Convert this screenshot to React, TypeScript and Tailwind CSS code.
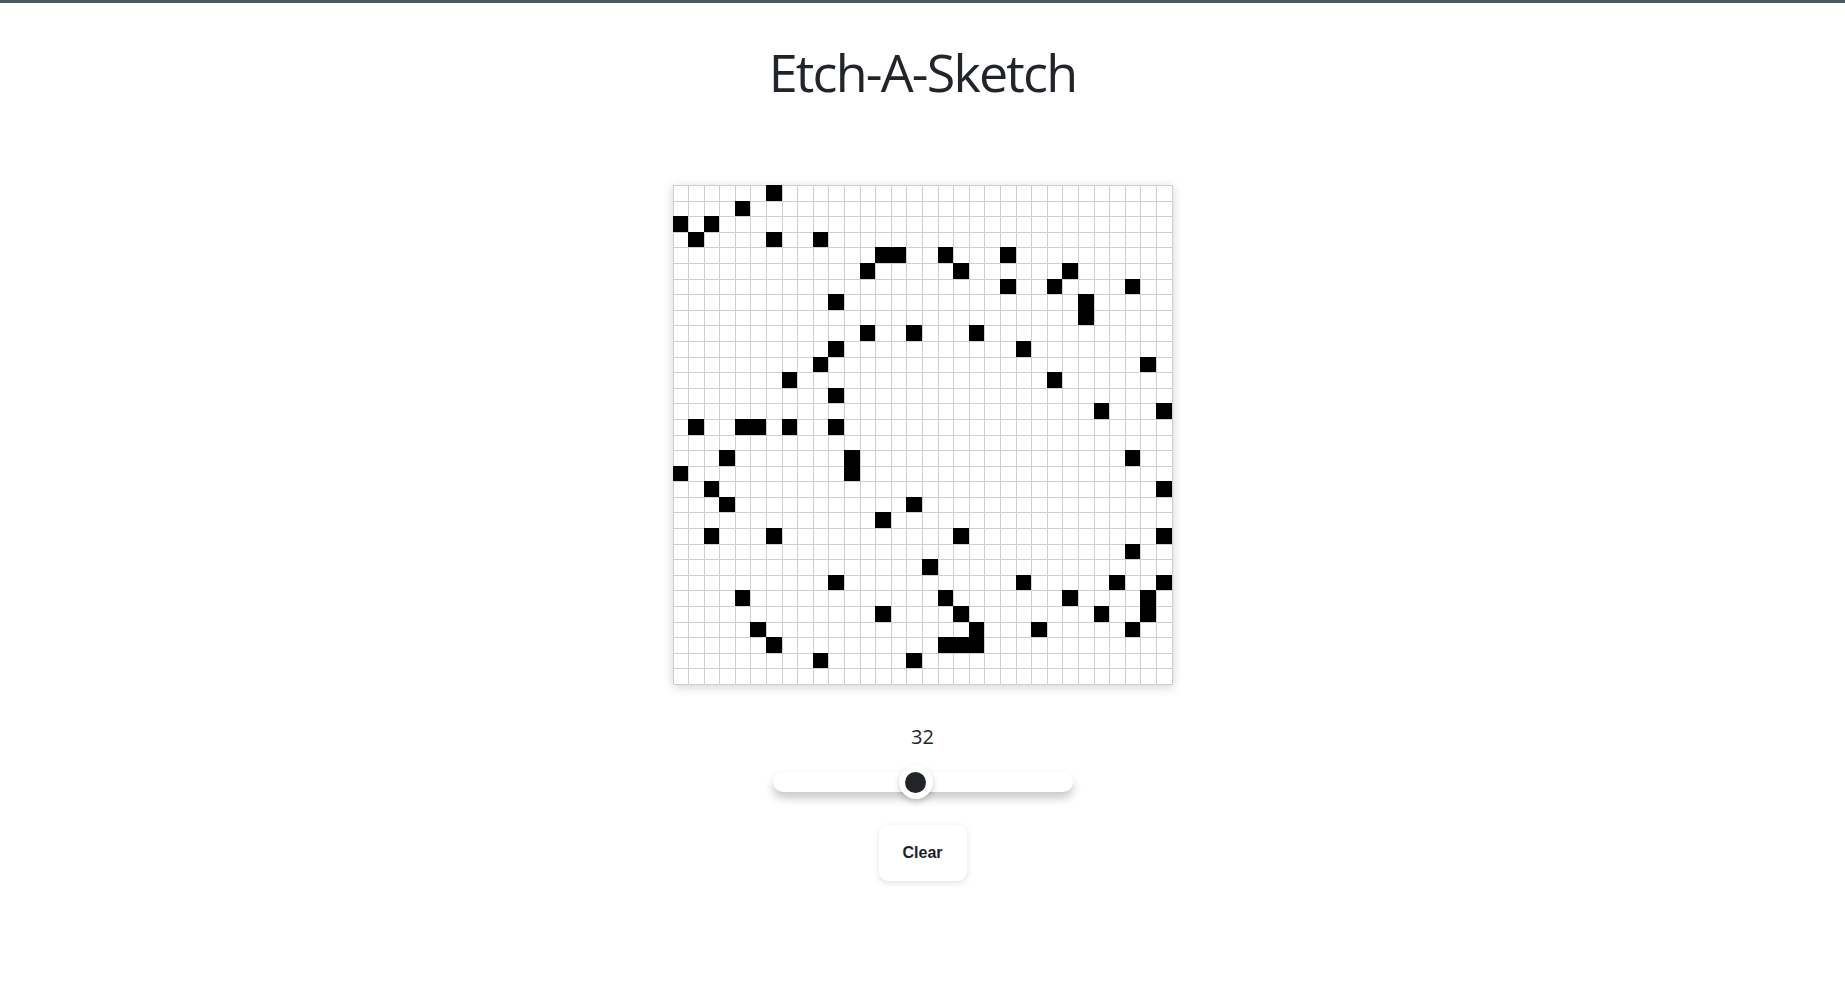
import React from "react";

const BLACK: number[][] = [
  [6],
  [4],
  [0, 2],
  [1, 6, 9],
  [13, 14, 17, 21],
  [12, 18, 25],
  [21, 24, 29],
  [10, 26],
  [26],
  [12, 15, 19],
  [10, 22],
  [9, 30],
  [7, 24],
  [10],
  [27, 31],
  [1, 4, 5, 7, 10],
  [],
  [3, 11, 29],
  [0, 11],
  [2, 31],
  [3, 15],
  [13],
  [2, 6, 18, 31],
  [29],
  [16],
  [10, 22, 28, 31],
  [4, 17, 25, 30],
  [13, 18, 27, 30],
  [5, 19, 23, 29],
  [6, 17, 18, 19],
  [9, 15],
  [],
];

export default function App() {
  const cells: React.ReactNode[] = [];
  for (let r = 0; r < 32; r++) {
    for (let c = 0; c < 32; c++) {
      const on = BLACK[r].includes(c);
      cells.push(
        <div
          key={`${r}-${c}`}
          className={
            on
              ? "border-l border-t border-black bg-black"
              : "border-l border-t border-[#cfcfcf] bg-white"
          }
        />
      );
    }
  }

  return (
    <div className="min-h-[982px] w-full bg-white font-['Open_Sans',sans-serif] text-[#212529]">
      <div className="h-[3px] w-full bg-[#485a66]" />
      <div className="flex flex-col items-center">
        <h1 className="mt-[43px] text-[52px] font-normal leading-none tracking-[-1.8px] text-[#212529]">
          Etch-A-Sketch
        </h1>
        <div className="mt-[87px] grid h-[500px] w-[500px] grid-cols-32 grid-rows-32 border-b border-r border-[#cfcfcf] shadow-[0_2px_10px_rgba(0,0,0,0.18)]">
          {cells}
        </div>
        <div className="mt-[42px] text-[20px] leading-none text-[#212529]">32</div>
        <div className="relative mt-[18px] flex h-[34px] w-[300px] items-center">
          <div className="h-[20px] w-full rounded-full bg-white shadow-[0_6px_10px_rgba(0,0,0,0.22)]" />
          <div className="absolute left-[126px] top-0 flex h-[34px] w-[34px] items-center justify-center rounded-full bg-white shadow-[0_3px_6px_rgba(0,0,0,0.2)]">
            <div className="h-[21px] w-[21px] rounded-full bg-[#212529]" />
          </div>
        </div>
        <button className="mt-[26px] flex h-[56px] w-[88px] items-center justify-center rounded-[9px] bg-white font-['Liberation_Sans',Arial,sans-serif] text-[16px] font-bold text-[#1c1e2b] shadow-[0_2px_6px_rgba(0,0,0,0.12)]">
          Clear
        </button>
      </div>
    </div>
  );
}
